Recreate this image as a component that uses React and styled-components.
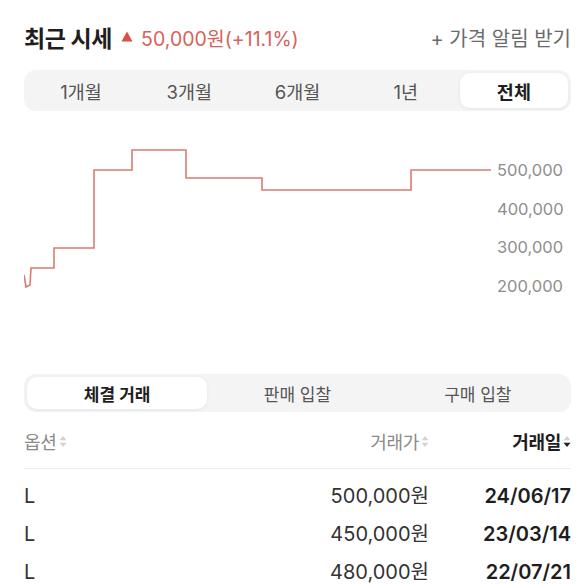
import React from "react";
import styled, { createGlobalStyle } from "styled-components";

const GlobalStyle = createGlobalStyle`
  html, body {
    margin: 0;
    padding: 0;
    background: #fff;
  }
  body {
    font-family: Inter, "Noto Sans CJK KR", sans-serif;
    color: #222;
  }
`;

const periods = ["1개월", "3개월", "6개월", "1년", "전체"];
const dealTabs = ["체결 거래", "판매 입찰", "구매 입찰"];
const yLabels = ["500,000", "400,000", "300,000", "200,000"];
const deals = [
  { option: "L", price: "500,000원", date: "24/06/17" },
  { option: "L", price: "450,000원", date: "23/03/14" },
  { option: "L", price: "480,000원", date: "22/07/21" },
];

// step line, coordinates inside the chart svg
const chartPoints = [
  [0, 155], [2, 167], [6, 165], [7, 148], [30, 148], [30, 128], [70, 128],
  [70, 50], [108, 50], [108, 30], [162, 30], [162, 58], [238, 58], [238, 70],
  [387, 70], [387, 50], [467, 50],
];

const SortIcon = ({ down }) => (
  <SortSvg width="8" height="13" viewBox="0 0 8 13">
    <path d="M4 1 L7.5 5.2 L0.5 5.2 Z" fill="#d4d4d4" />
    <path d="M4 12 L7.5 7.8 L0.5 7.8 Z" fill={down ? "#222" : "#d4d4d4"} />
  </SortSvg>
);

const App = () => {
  return (
    <Page>
      <GlobalStyle />
      <Header>
        <Title>최근 시세</Title>
        <Change>
          <svg width="12" height="11" viewBox="0 0 12 11">
            <path d="M6 0.5 L11.5 10.5 L0.5 10.5 Z" fill="#dd4d44" />
          </svg>
          <span>50,000원(+11.1%)</span>
        </Change>
        <AlertLink>+ 가격 알림 받기</AlertLink>
      </Header>

      <Segmented $height={41}>
        {periods.map((p) => (
          <SegItem key={p} $active={p === "전체"} $size={18.5}>
            {p}
          </SegItem>
        ))}
      </Segmented>

      <ChartRow>
        <svg width="470" height="254" viewBox="0 0 470 254">
          <polyline
            points={chartPoints.map((p) => p.join(",")).join(" ")}
            fill="none"
            stroke="#dc7a72"
            strokeWidth="1.6"
            strokeLinejoin="miter"
          />
        </svg>
        <YAxis>
          {yLabels.map((l) => (
            <YLabel key={l}>{l}</YLabel>
          ))}
        </YAxis>
      </ChartRow>

      <Segmented $height={38}>
        {dealTabs.map((t) => (
          <SegItem key={t} $active={t === "체결 거래"} $size={17}>
            {t}
          </SegItem>
        ))}
      </Segmented>

      <TableHead>
        <HeadCell>
          옵션
          <SortIcon />
        </HeadCell>
        <HeadCell $right>
          거래가
          <SortIcon />
        </HeadCell>
        <HeadCell $right $active>
          거래일
          <SortIcon down />
        </HeadCell>
      </TableHead>
      <Divider />

      <Rows>
        {deals.map((d) => (
          <Row key={d.date}>
            <Cell>{d.option}</Cell>
            <Cell $right>{d.price}</Cell>
            <Cell $right $bold>
              {d.date}
            </Cell>
          </Row>
        ))}
      </Rows>
    </Page>
  );
};

const Page = styled.div`
  padding: 17px 13px 0 24px;
  height: 584px;
  box-sizing: border-box;
  overflow: hidden;
`;

const Header = styled.div`
  display: flex;
  align-items: center;
  height: 40px;
`;

const Title = styled.div`
  font-size: 23px;
  font-weight: 700;
  color: #1e1e1e;
  letter-spacing: -0.4px;
`;

const Change = styled.div`
  display: flex;
  align-items: center;
  gap: 8px;
  margin-left: 9px;
  font-size: 19.5px;
  color: #d7625b;
  svg {
    margin-top: -2px;
  }
`;

const AlertLink = styled.div`
  margin-left: auto;
  font-size: 20px;
  color: #6b6b6b;
`;

const Segmented = styled.div`
  display: grid;
  grid-auto-flow: column;
  grid-auto-columns: 1fr;
  height: ${({ $height }) => $height}px;
  box-sizing: border-box;
  padding: 3px;
  margin-top: 13px;
  background: #f4f4f4;
  border-radius: 12px;
`;

const SegItem = styled.div`
  display: flex;
  align-items: center;
  justify-content: center;
  border-radius: 10px;
  font-size: ${({ $size }) => $size}px;
  color: ${({ $active }) => ($active ? "#1e1e1e" : "#555")};
  font-weight: ${({ $active }) => ($active ? 700 : 400)};
  background: ${({ $active }) => ($active ? "#fff" : "transparent")};
  box-shadow: ${({ $active }) =>
    $active ? "0 1px 4px rgba(0, 0, 0, 0.06)" : "none"};
`;

const ChartRow = styled.div`
  display: flex;
  margin-top: 9px;
  height: 254px;
  & + ${Segmented} {
    margin-top: 0;
  }
`;

const YAxis = styled.div`
  display: flex;
  flex-direction: column;
  padding-top: 31px;
  margin-left: 3px;
`;

const YLabel = styled.div`
  height: 38.7px;
  line-height: 38.7px;
  font-size: 16.5px;
  color: #8e8e8e;
`;

const TableHead = styled.div`
  display: grid;
  grid-template-columns: 1fr 110px 142px;
  height: 38px;
  margin-top: 10px;
  align-items: center;
`;

const HeadCell = styled.div`
  display: flex;
  align-items: center;
  justify-content: ${({ $right }) => ($right ? "flex-end" : "flex-start")};
  font-size: 18px;
  color: ${({ $active }) => ($active ? "#1e1e1e" : "#8a8a8a")};
  font-weight: ${({ $active }) => ($active ? 700 : 400)};
  letter-spacing: -0.3px;
`;

const SortSvg = styled.svg`
  margin-left: 2px;
`;

const Divider = styled.div`
  height: 1px;
  background: #ececec;
  margin-top: 8px;
`;

const Rows = styled.div`
  padding-top: 8px;
`;

const Row = styled.div`
  display: grid;
  grid-template-columns: 1fr 110px 142px;
  height: 38px;
  align-items: center;
`;

const Cell = styled.div`
  text-align: ${({ $right }) => ($right ? "right" : "left")};
  font-size: 20px;
  line-height: 24px;
  color: ${({ $bold }) => ($bold ? "#1e1e1e" : "#333")};
  font-weight: ${({ $bold }) => ($bold ? 600 : 400)};
`;

export default App;
